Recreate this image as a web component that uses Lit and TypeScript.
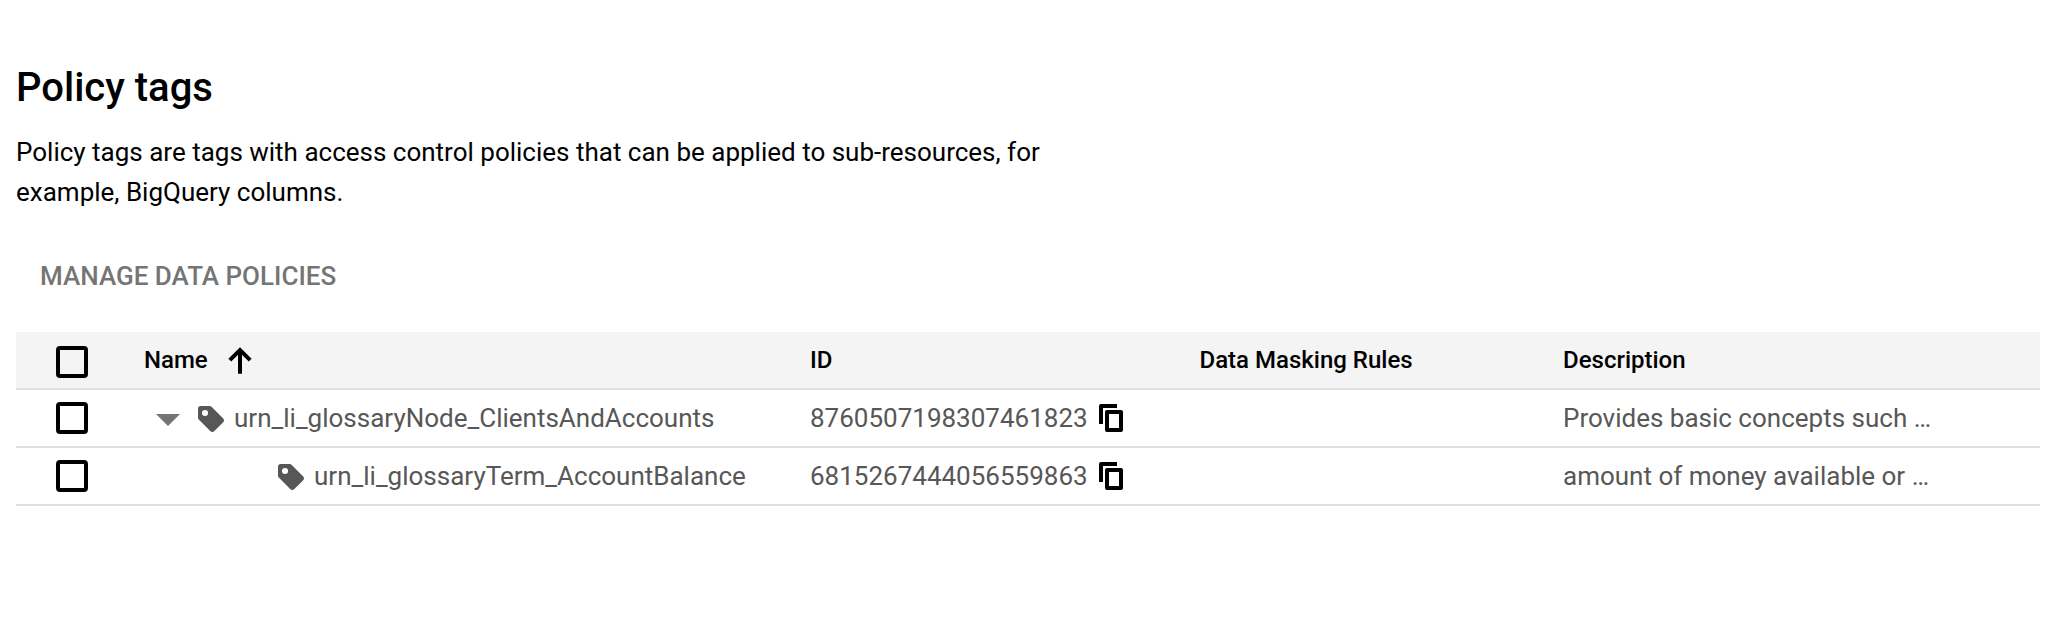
import { LitElement, html, css, nothing } from "lit";
import { customElement } from "lit/decorators.js";

interface PolicyTag {
  name: string;
  id: string;
  description: string;
  parent: boolean;
}

const TAGS: PolicyTag[] = [
  {
    name: "urn_li_glossaryNode_ClientsAndAccounts",
    id: "8760507198307461823",
    description: "Provides basic concepts such …",
    parent: true,
  },
  {
    name: "urn_li_glossaryTerm_AccountBalance",
    id: "6815267444056559863",
    description: "amount of money available or …",
    parent: false,
  },
];

@customElement("app-root")
export class AppRoot extends LitElement {
  static styles = css`
    :host {
      display: block;
      box-sizing: border-box;
      min-height: 634px;
      padding: 64px 32px 0 16px;
      background: #fff;
      color: #000;
      font-family: Roboto, sans-serif;
    }
    h1 {
      margin: 0;
      font-size: 40px;
      line-height: 47px;
      font-weight: 500;
    }
    p {
      margin: 21px 0 0;
      width: 1060px;
      font-size: 26px;
      line-height: 40px;
    }
    .manage {
      display: block;
      margin: 49px 0 41px;
      padding: 0 24px;
      border: 0;
      background: none;
      font: 500 26px/30px Roboto, sans-serif;
      color: #757575;
    }
    .row {
      display: grid;
      grid-template-columns: 128px 666px 389.5px 363.5px 1fr;
      align-items: center;
      height: 56px;
      border-bottom: 2px solid #e0e0e0;
      font-size: 26px;
      line-height: 30px;
      color: #575757;
      white-space: nowrap;
    }
    .head {
      background: #f4f4f4;
      color: #000;
      font-size: 24px;
      line-height: 28px;
      font-weight: 500;
    }
    .box {
      box-sizing: border-box;
      width: 32px;
      height: 32px;
      margin-left: 40px;
      border: 4px solid #000;
      border-radius: 4px;
    }
    .head .box {
      margin-top: 4px;
    }
    .cell {
      display: flex;
      align-items: center;
    }
    .sort {
      width: 24px;
      height: 28px;
      margin-left: 20px;
    }
    .node {
      padding-left: 12px;
    }
    .leaf {
      padding-left: 134px;
    }
    .caret {
      width: 24px;
      height: 12px;
      margin: 4px 18px 0 0;
    }
    .tag {
      width: 26px;
      height: 26px;
      margin: 2px 10px 0 0;
    }
    .id {
      width: 289px;
    }
    .copy {
      width: 24px;
      height: 28px;
    }
    svg {
      display: block;
      flex: none;
    }
  `;

  private renderRow(t: PolicyTag) {
    return html`
      <div class="row">
        <div class="box"></div>
        <div class="cell ${t.parent ? "node" : "leaf"}">
          ${t.parent
            ? html`<svg class="caret" viewBox="0 0 24 12"><path d="M0 0h24L12 12z" fill="#757575" /></svg>`
            : nothing}
          <svg class="tag" viewBox="2 2 20 20">
            <path
              fill="#575757"
              fill-rule="evenodd"
              d="M21.41 11.58l-9-9C12.05 2.22 11.55 2 11 2H4c-1.1 0-2 .9-2 2v7c0 .55.22 1.05.59 1.42l9 9c.36.36.86.58 1.41.58.55 0 1.05-.22 1.41-.59l7-7c.37-.36.59-.86.59-1.41 0-.55-.23-1.06-.59-1.42zM7.4 9.75a2.35 2.35 0 1 1 0-4.7 2.35 2.35 0 0 1 0 4.7z"
            />
          </svg>
          <span>${t.name}</span>
        </div>
        <div class="cell">
          <span class="id">${t.id}</span>
          <svg class="copy" viewBox="0 0 24 28">
            <path d="M18 0H2a2 2 0 0 0-2 2v18h4V4h14z" />
            <path
              fill-rule="evenodd"
              d="M8 6h14a2 2 0 0 1 2 2v18a2 2 0 0 1-2 2H8a2 2 0 0 1-2-2V8a2 2 0 0 1 2-2zM10 10v14h10V10z"
            />
          </svg>
        </div>
        <div></div>
        <div>${t.description}</div>
      </div>
    `;
  }

  render() {
    return html`
      <h1>Policy tags</h1>
      <p>
        Policy tags are tags with access control policies that can be applied to sub-resources, for
        example, BigQuery columns.
      </p>
      <button class="manage">MANAGE DATA POLICIES</button>
      <div class="row head">
        <div class="box"></div>
        <div class="cell">
          <span>Name</span>
          <svg class="sort" viewBox="0 0 24 28" fill="none" stroke="#000" stroke-width="4">
            <path d="M1.8 14.2L12 4l10.2 10.2M12 4v23.8" />
          </svg>
        </div>
        <div>ID</div>
        <div>Data Masking Rules</div>
        <div>Description</div>
      </div>
      ${TAGS.map((t) => this.renderRow(t))}
    `;
  }
}
